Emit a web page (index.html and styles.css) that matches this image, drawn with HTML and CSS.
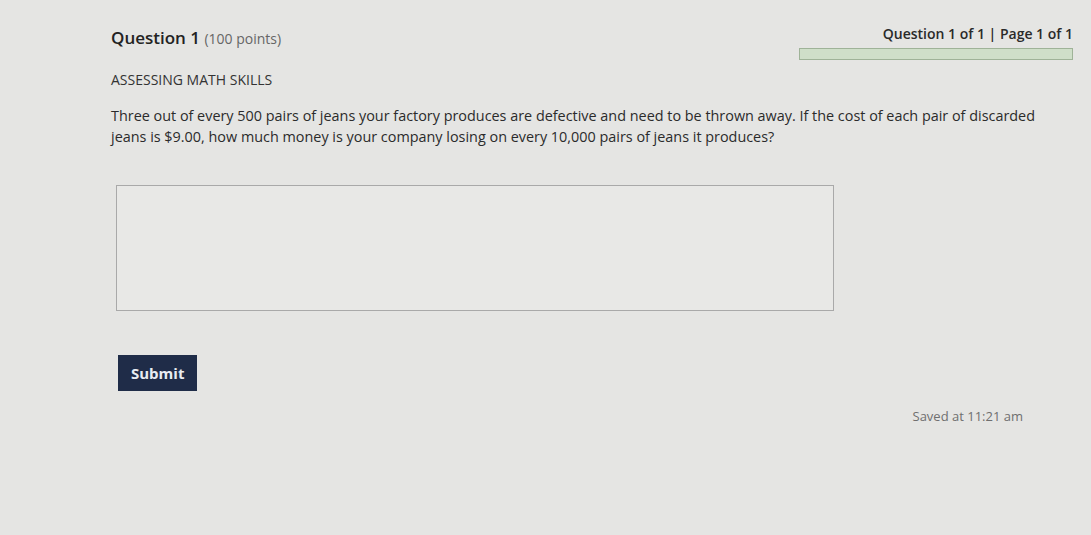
FILE: index.html
```html
<!DOCTYPE html>
<html lang="en">
<head>
    <meta charset="UTF-8">
    <meta name="viewport" content="width=device-width, initial-scale=1.0">
    <title>Question 1</title>
    <link rel="stylesheet" href="styles.css">
</head>
<body>

    <div class="page">
        <div class="top">
            <h2 class="q-title">Question 1 <span class="points">(100 points)</span></h2>
            <div class="progress">
                <div class="progress-text">Question 1 of 1 | Page 1 of 1</div>
                <div class="progress-bar"></div>
            </div>
        </div>

        <p class="section">ASSESSING MATH SKILLS</p>

        <p class="question">Three out of every 500 pairs of jeans your factory produces are defective and need to be thrown away. If the cost of each pair of discarded jeans is $9.00, how much money is your company losing on every 10,000 pairs of jeans it produces?</p>

        <textarea class="answer"></textarea>

        <div class="actions">
            <button class="submit">Submit</button>
        </div>
        <p class="saved">Saved at 11:21 am</p>
    </div>

</body>
</html>
```

FILE: styles.css
```css
body {
    margin: 0;
    font-family: "Open Sans", Arial, sans-serif;
    background-color: #e5e5e3;
    color: #2b2b2b;
}
.page {
    padding: 24px 18px 0 111px;
}
.top {
    display: flex;
    justify-content: space-between;
    align-items: flex-start;
}
.q-title {
    margin: 2px 0 0;
    font-size: 17px;
    font-weight: 600;
    color: #222;
}
.points {
    font-size: 14px;
    font-weight: 400;
    color: #666;
}
.progress {
    width: 274px;
    text-align: right;
}
.progress-text {
    font-size: 14px;
    font-weight: 600;
    color: #2a2a2a;
    line-height: 20px;
}
.progress-bar {
    height: 10px;
    margin-top: 4px;
    background: #cfdfc9;
    border: 1px solid #9fb398;
}
.section {
    margin: 10px 0 0;
    font-size: 14px;
    color: #333;
}
.question {
    margin: 16px 0 0;
    width: 925px;
    font-size: 14.4px;
    line-height: 21px;
    color: #2b2b2b;
}
.answer {
    display: block;
    margin: 38px 0 0 5px;
    width: 712px;
    height: 120px;
    border: 1px solid #a9a9a9;
    background: #e8e8e6;
    resize: none;
}
.actions {
    margin-top: 44px;
}
.submit {
    margin-left: 7px;
    background: #1f2c48;
    color: #e8ecf2;
    font-family: "Open Sans", Arial, sans-serif;
    font-size: 15px;
    font-weight: 700;
    padding: 8px 13px;
    border: none;
    cursor: pointer;
}
.saved {
    margin: 16px 0 0;
    width: 912px;
    text-align: right;
    font-size: 13px;
    color: #6f6f6f;
}
```
